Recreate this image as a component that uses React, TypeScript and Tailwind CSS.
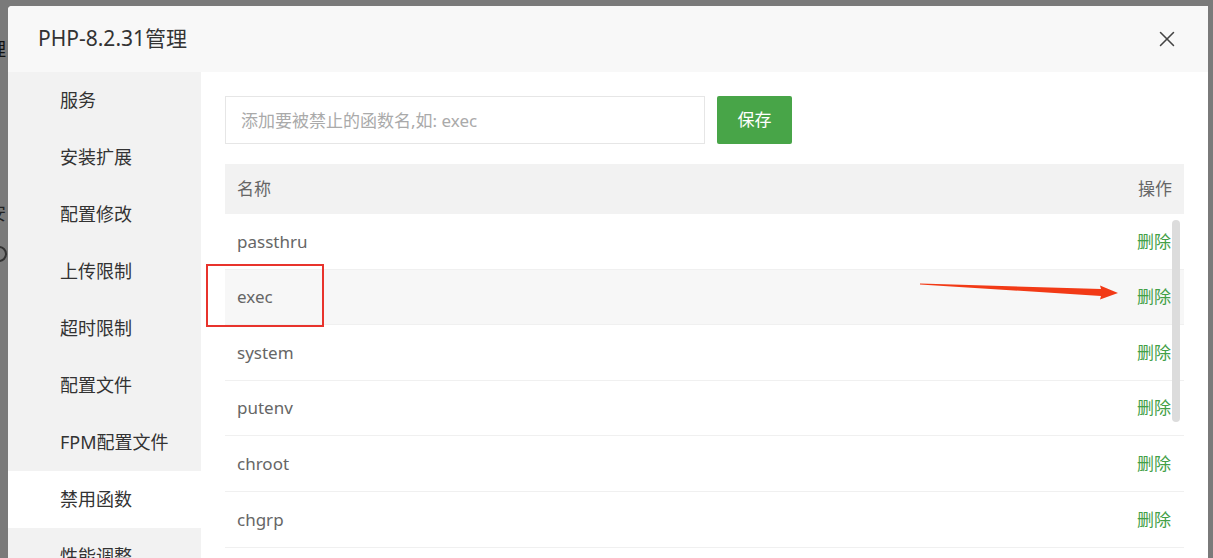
import { X } from "lucide-react";

const menu = [
  "服务",
  "安装扩展",
  "配置修改",
  "上传限制",
  "超时限制",
  "配置文件",
  "FPM配置文件",
  "禁用函数",
  "性能调整",
  "日志",
];

const disabled = ["passthru", "exec", "system", "putenv", "chroot", "chgrp", "chown"];

const font = { fontFamily: '"Noto Sans", "Noto Sans CJK SC", sans-serif' };

function Sidebar() {
  return (
    <div className="w-[193px] shrink-0 bg-[#f2f2f2]">
      {menu.map((item) => {
        const active = item === "禁用函数";
        return (
          <div
            key={item}
            className={`flex h-[57px] items-center pl-[52px] text-[18px] text-[#333] ${
              active ? "bg-white" : ""
            }`}
          >
            {item}
          </div>
        );
      })}
    </div>
  );
}

function FunctionTable() {
  return (
    <div className="mt-5 w-[959px] text-[17px] text-[#666]">
      <div className="flex h-[50px] items-center justify-between bg-[#f2f2f2] px-3">
        <span>名称</span>
        <span>操作</span>
      </div>
      <div className="relative">
        {disabled.map((name) => (
          <div
            key={name}
            className={`flex h-[55.6px] items-center justify-between border-b border-[#f0f0f0] pl-3 pr-[13px] ${
              name === "exec" ? "bg-[#f7f7f7]" : "bg-white"
            }`}
          >
            <span>{name}</span>
            <span className="text-[#43a047]">删除</span>
          </div>
        ))}
        {/* scroll thumb */}
        <div className="absolute right-[4px] top-[6px] h-[202px] w-[8px] rounded-full bg-[#dcdcdc]" />
      </div>
    </div>
  );
}

export default function App() {
  return (
    <div className="relative h-[558px] w-[1213px] overflow-hidden bg-[#7a7a7a]" style={font}>
      {/* page behind the overlay */}
      <div className="absolute left-[-12px] top-[36px] text-[18px] text-[#111]">理</div>
      <div className="absolute left-[-12px] top-[200px] text-[18px] text-[#222]">安</div>
      <div className="absolute left-[-9px] top-[246px] h-[16px] w-[16px] rounded-full border-2 border-[#333]" />

      <div className="absolute left-[8px] top-[6px] flex h-[580px] w-[1200px] flex-col overflow-hidden rounded-tl-[4px] bg-white">
        <div className="flex h-[66px] shrink-0 items-center justify-between bg-[#f8f8f8] pl-[30px] pr-[28px]">
          <span className="text-[21px] text-[#333]">PHP-8.2.31管理</span>
          <X className="h-[26px] w-[26px] text-[#444]" strokeWidth={1.4} />
        </div>
        <div className="flex flex-1">
          <Sidebar />
          <div className="flex-1 px-6 pt-6">
            <div className="flex gap-3">
              <input
                className="h-[48px] w-[480px] border border-[#e6e6e6] px-[15px] text-[17px] text-[#333] outline-none placeholder:text-[#aaa]"
                placeholder="添加要被禁止的函数名,如: exec"
                style={font}
              />
              <button className="h-[48px] w-[75px] rounded-[2px] bg-[#48a548] text-[17px] text-white">
                保存
              </button>
            </div>
            <FunctionTable />
          </div>
        </div>
      </div>

      {/* annotation: highlight + arrow */}
      <div className="pointer-events-none absolute left-[206px] top-[264px] h-[63px] w-[118px] border-2 border-[#e8332c]" />
      <svg className="pointer-events-none absolute left-0 top-0" width="1213" height="558">
        <polygon
          points="920,283.5 1101,289 1100,285.5 1118,293 1100,299.5 1101,296 920,284.5"
          fill="#f23a16"
        />
      </svg>
    </div>
  );
}
